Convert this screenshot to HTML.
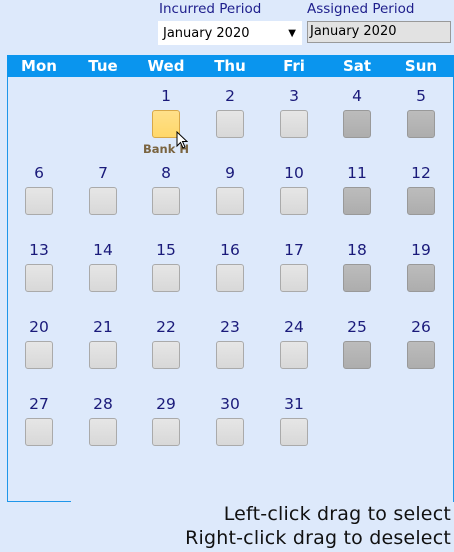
<!DOCTYPE html>
<html><head><style>
body{margin:0;width:454px;height:552px;background:#dde9fb;position:relative;overflow:hidden;font-family:"DejaVu Sans","Liberation Sans",sans-serif}
.lbl{position:absolute;top:1px;font-size:13.5px;color:#1e1e8c}
.sel{position:absolute;left:158px;top:21px;width:144px;height:24px;background:#fff;font-size:13px;line-height:26px;box-sizing:border-box;padding-left:5px;color:#000}
.sel span{position:absolute;right:6px;top:0;font-size:10px}
.inp{position:absolute;left:307px;top:21px;width:144px;height:22px;background:#e2e2e2;border:1px solid #999;box-sizing:border-box;font-size:13px;line-height:20px;padding-left:2px}
.hdr{position:absolute;left:7px;top:55px;width:447px;height:22px;background:#0a95ee}
.h{position:absolute;top:57px;width:64px;margin-left:-32px;text-align:center;color:#fff;font-weight:bold;font-size:15px}
.bl{position:absolute;left:7px;top:77px;width:1px;height:425px;background:#1e96ea}
.bb{position:absolute;left:7px;top:501px;width:64px;height:1px;background:#1e96ea}
.br{position:absolute;left:453px;top:77px;width:1px;height:425px;background:#1e96ea}
.n{position:absolute;width:64px;margin-left:-32px;text-align:center;font-size:15.5px;color:#1a1a7a}
.b{position:absolute;width:26px;height:26px;margin-left:-14px;border:1px solid #aaa;border-radius:3px;background:linear-gradient(#e6e6e6,#d8d8d8)}
.b.w{background:linear-gradient(#bcbcbc,#adadad);border-color:#999}
.b.y{background:linear-gradient(#ffe08a,#ffd86a);border-color:#d8a848}
.txt{position:absolute;right:3px;font-size:19px;color:#111;text-align:right;letter-spacing:0.2px}
</style></head><body>
<div class="lbl" style="left:159px">Incurred Period</div>
<div class="lbl" style="left:307px">Assigned Period</div>
<div class="sel">January 2020<span>▼</span></div>
<div class="inp">January 2020</div>
<div class="hdr"></div>
<div class="h" style="left:39px">Mon</div><div class="h" style="left:103px">Tue</div><div class="h" style="left:166px">Wed</div><div class="h" style="left:230px">Thu</div><div class="h" style="left:294px">Fri</div><div class="h" style="left:357px">Sat</div><div class="h" style="left:421px">Sun</div>
<div class="bl"></div><div class="bb"></div><div class="br"></div>
<div id="g"></div>
<div style="position:absolute;left:143px;top:142px;font-size:11.5px;font-weight:bold;color:#7a6440">Bank H</div>
<svg style="position:absolute;left:176px;top:131px" width="12" height="20" viewBox="0 0 12 20"><path d="M1 1 L1 15 L4.5 11.5 L7 17 L9 16 L6.5 10.5 L11 10.5 Z" fill="#fff" stroke="#000" stroke-width="1"/></svg>
<div class="txt" style="top:503px">Left-click drag to select</div>
<div class="txt" style="top:527px">Right-click drag to deselect</div>
<script>
var g=document.getElementById('g'),h='';
var cx=[39,103,166,230,294,357,421];
for(var d=1;d<=31;d++){var i=d+1,r=Math.floor(i/7),c=i%7;var y=87+r*77;
h+='<div class="n" style="left:'+cx[c]+'px;top:'+y+'px">'+d+'</div>';
h+='<div class="b'+(d==1?' y':(c>=5?' w':''))+'" style="left:'+cx[c]+'px;top:'+(y+23)+'px"></div>';}
g.innerHTML=h;
</script>
</body></html>
